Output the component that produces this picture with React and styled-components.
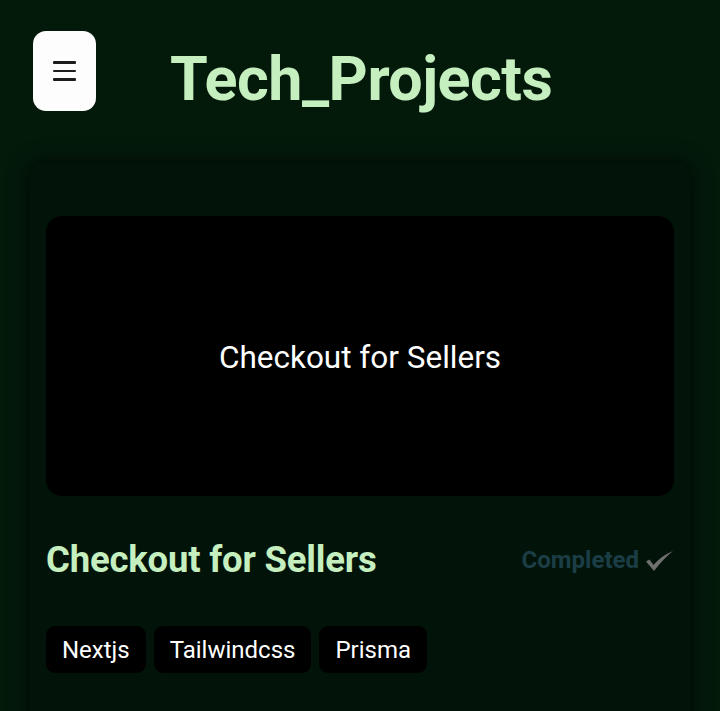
import React from "react";
import styled, { createGlobalStyle } from "styled-components";

const GlobalStyle = createGlobalStyle`
  html, body {
    margin: 0;
    padding: 0;
    background: #031a0b;
    font-family: Roboto, "Liberation Sans", sans-serif;
  }
`;

const Page = styled.div`
  width: 720px;
  height: 711px;
  overflow: hidden;
  background: #031a0b;
  padding: 31px 30px 0 30px;
  box-sizing: border-box;
`;

const Header = styled.header`
  display: flex;
  align-items: center;
  gap: 74px;
  height: 80px;
  padding-left: 3px;
`;

const MenuButton = styled.button`
  width: 63px;
  height: 80px;
  border: none;
  border-radius: 13px;
  background: #fdfdfd;
  display: flex;
  flex-direction: column;
  align-items: center;
  justify-content: center;
  gap: 6px;
  padding: 0;
  span {
    display: block;
    width: 23px;
    height: 2.5px;
    background: #1c1c1c;
    border-radius: 1px;
  }
`;

const Title = styled.h1`
  margin: 16px 0 0 0;
  font-size: 61px;
  font-weight: 700;
  color: #c6efc0;
  letter-spacing: -0.5px;
  line-height: 1;
`;

const Card = styled.section`
  margin-top: 52px;
  background: #021409;
  border-radius: 14px;
  box-shadow: 0 0 18px 4px rgba(0, 0, 0, 0.55);
  padding: 53px 16px 40px 16px;
  height: 620px;
  box-sizing: border-box;
`;

const Preview = styled.div`
  height: 280px;
  background: #000;
  border-radius: 16px;
  display: flex;
  align-items: center;
  justify-content: center;
  color: #fff;
  font-size: 31.5px;
  font-weight: 400;
  padding-top: 2px;
  box-sizing: border-box;
`;

const InfoRow = styled.div`
  display: flex;
  align-items: center;
  justify-content: space-between;
  margin-top: 42px;
`;

const ProjectName = styled.h2`
  margin: 0;
  font-size: 36.5px;
  font-weight: 700;
  color: #c6efc0;
  letter-spacing: -0.2px;
`;

const Status = styled.span`
  display: flex;
  align-items: center;
  gap: 6px;
  color: #1b3d46;
  font-size: 24px;
  font-weight: 700;
  svg {
    margin-top: 2px;
  }
`;

const Tags = styled.div`
  display: flex;
  gap: 8px;
  margin-top: 45px;
`;

const Tag = styled.span`
  background: #000;
  color: #fff;
  border-radius: 9px;
  height: 47px;
  padding: 0 16px;
  display: flex;
  align-items: center;
  font-size: 24px;
`;

function Check() {
  return (
    <svg width="29" height="22" viewBox="0 0 29 22">
      <path
        d="M1 11.5 L4.5 9.5 L8.5 15 Q16 6 28 1 Q18 9 9 21 Z"
        fill="#707070"
      />
    </svg>
  );
}

export default function App() {
  const tags = ["Nextjs", "Tailwindcss", "Prisma"];
  return (
    <>
      <GlobalStyle />
      <Page>
        <Header>
          <MenuButton aria-label="menu">
            <span />
            <span />
            <span />
          </MenuButton>
          <Title>Tech_Projects</Title>
        </Header>
        <Card>
          <Preview>Checkout for Sellers</Preview>
          <InfoRow>
            <ProjectName>Checkout for Sellers</ProjectName>
            <Status>
              Completed <Check />
            </Status>
          </InfoRow>
          <Tags>
            {tags.map((t) => (
              <Tag key={t}>{t}</Tag>
            ))}
          </Tags>
        </Card>
      </Page>
    </>
  );
}
